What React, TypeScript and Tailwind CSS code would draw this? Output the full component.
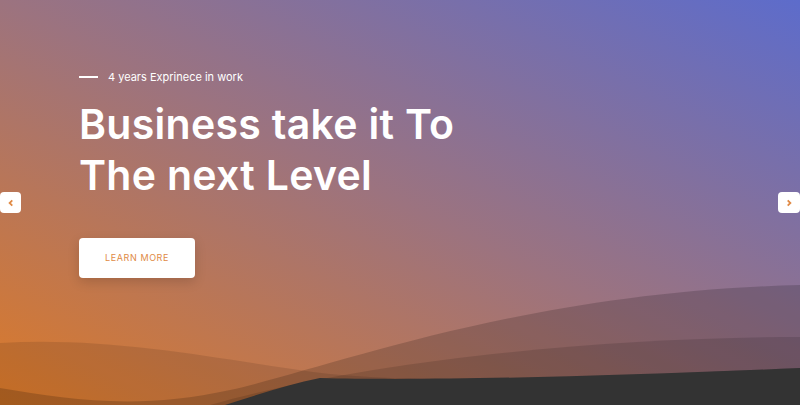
import React from "react";

const Hero = () => {
  return (
    <section className="relative isolate h-[405px] w-full overflow-hidden bg-[linear-gradient(to_top_right,#dc7a28_0%,#9c737f_50%,#5d6ccb_100%)] font-['Inter',sans-serif]">
      {/* waves */}
      <svg
        className="absolute inset-0 -z-10 h-full w-full"
        viewBox="0 0 800 405"
        preserveAspectRatio="none"
      >
        <path
          d="M0,343 C120,336 230,362 330,374 C450,386 650,374 800,368 L800,405 L0,405 Z"
          fill="#000"
          fillOpacity="0.1"
        />
        <path
          d="M0,388 C70,400 140,410 230,390 C330,368 520,292 800,285 L800,405 L0,405 Z"
          fill="#000"
          fillOpacity="0.17"
        />
        <path
          d="M210,405 C360,362 600,337 800,337 L800,405 Z"
          fill="#000"
          fillOpacity="0.12"
        />
        <path
          d="M225,405 C260,394 290,384 320,378 C430,381 620,376 800,368 L800,405 Z"
          fill="#333333"
        />
      </svg>

      <button className="absolute left-0 top-[192px] flex h-[21px] w-[21px] items-center justify-center rounded-[4px] bg-white text-[#e08a45]">
        <svg width="8" height="8" viewBox="0 0 8 8" fill="none">
          <path d="M5.3 1.3 L2.6 4 L5.3 6.7" stroke="currentColor" strokeWidth="1.8" />
        </svg>
      </button>
      <button className="absolute right-0 top-[192px] flex h-[21px] w-[22px] items-center justify-center rounded-[4px] bg-white text-[#e08a45]">
        <svg width="8" height="8" viewBox="0 0 8 8" fill="none">
          <path d="M2.7 1.3 L5.4 4 L2.7 6.7" stroke="currentColor" strokeWidth="1.8" />
        </svg>
      </button>

      <div className="flex flex-col pl-[79px] pt-[70px]">
        <div className="flex items-center gap-[10px] text-[11px] leading-[14px] text-white">
          <span className="h-[2px] w-[19px] bg-white"></span>
          <span>4 years Exprinece in work</span>
        </div>
        <h1 className="mt-[15px] text-[41px] font-semibold leading-[51px] tracking-[0.3px] text-white">
          Business take it To
          <br />
          The next Level
        </h1>
        <button className="mt-[37px] flex h-[40px] w-[116px] items-center justify-center rounded-[4px] bg-white text-[9px] tracking-[0.6px] text-[#e08a45] shadow-[0_4px_12px_rgba(0,0,0,0.15)]">
          LEARN MORE
        </button>
      </div>
    </section>
  );
};

export default function App() {
  return <Hero />;
}
